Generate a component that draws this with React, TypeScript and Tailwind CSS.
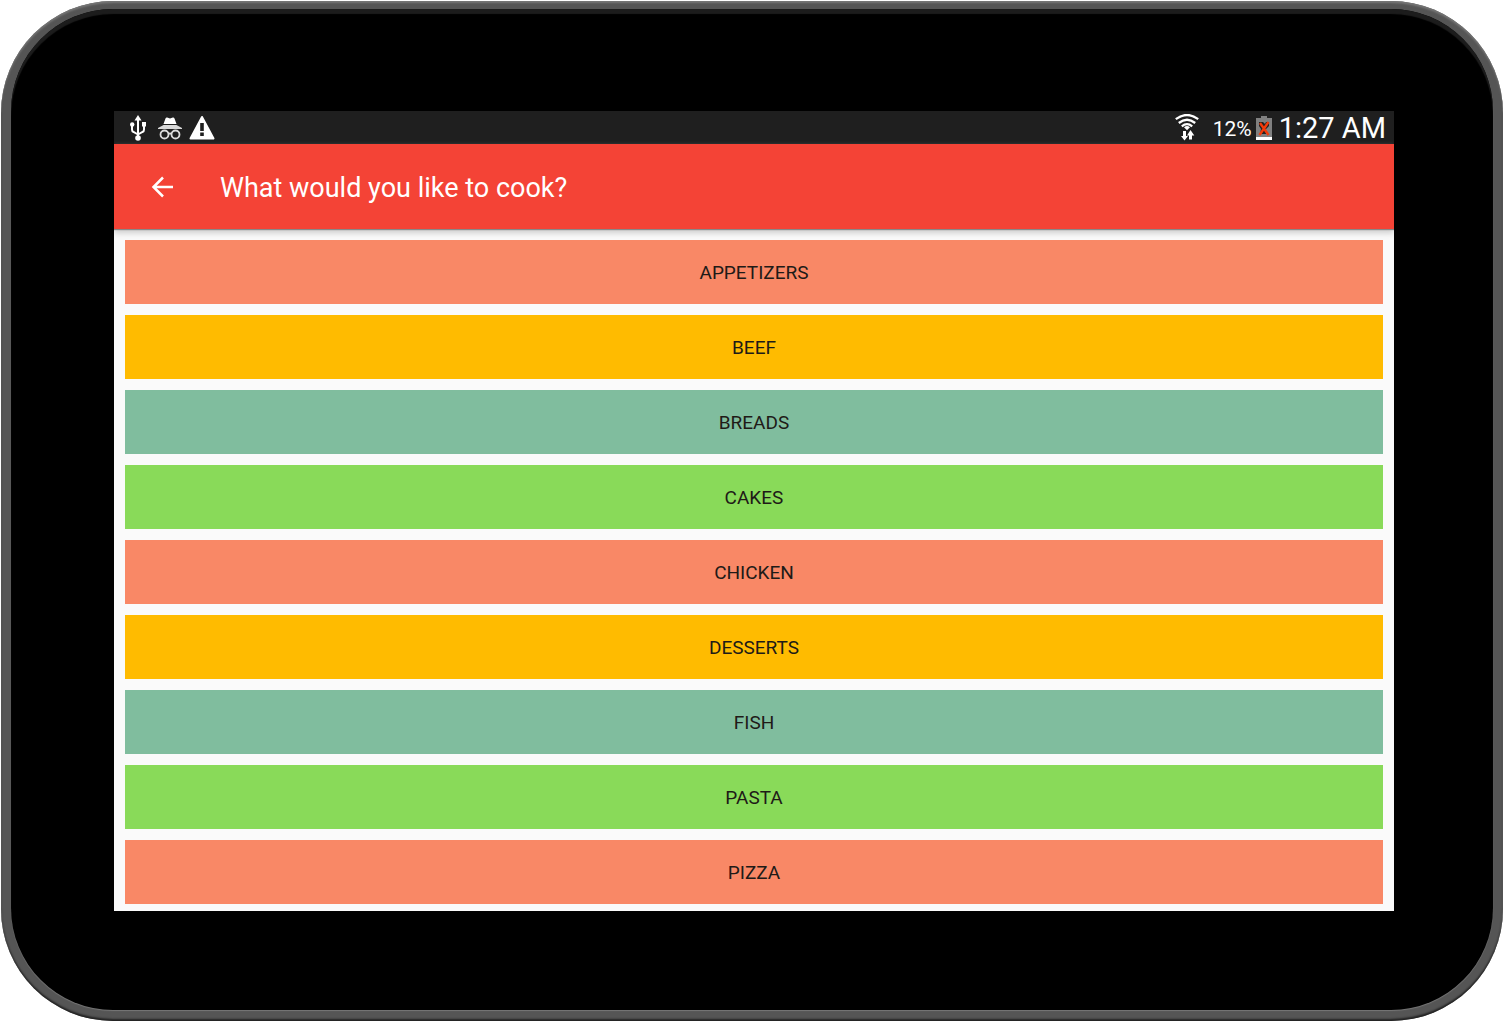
import React from "react";

const categories = [
  { name: "Appetizers", color: "bg-[#f98866]" },
  { name: "Beef", color: "bg-[#ffbb00]" },
  { name: "Breads", color: "bg-[#80bd9e]" },
  { name: "Cakes", color: "bg-[#89da59]" },
  { name: "Chicken", color: "bg-[#f98866]" },
  { name: "Desserts", color: "bg-[#ffbb00]" },
  { name: "Fish", color: "bg-[#80bd9e]" },
  { name: "Pasta", color: "bg-[#89da59]" },
  { name: "Pizza", color: "bg-[#f98866]" },
];

function UsbIcon() {
  return (
    <svg className="h-[26px] w-4" viewBox="0 0 16 26" fill="none" stroke="#fff" strokeWidth="2" aria-hidden="true">
      <path d="M8 4v18M2 10v4.500Q2 16.500 3.500 17L8 19.500M14 9v5.500Q14 16.500 12.500 17L8 19.500" />
      <path d="M8 0l3.500 5.500h-7z" fill="#fff" stroke="none" />
      <circle cx="2.200" cy="9.500" r="2.200" fill="#fff" stroke="none" />
      <path d="M12 7h4v4.500h-4z" fill="#fff" stroke="none" />
      <circle cx="8" cy="23" r="2.800" fill="#fff" stroke="none" />
    </svg>
  );
}

function IncognitoIcon() {
  return (
    <svg className="h-6 w-[26px]" viewBox="0 0 26 24" fill="none" aria-hidden="true">
      <path d="M6.500 8L8.500 2.500Q9 1.200 10.200 1.500L13 2.500 15.800 1.500Q17 1.200 17.500 2.500L19.500 8z" fill="#fff" />
      <path d="M6.500 9h13l5.500 3v1H1v-1z" fill="#d8d8d8" />
      <circle cx="7.500" cy="18.500" r="4" stroke="#ddd" strokeWidth="1.800" />
      <circle cx="18.500" cy="18.500" r="4" stroke="#ddd" strokeWidth="1.800" />
      <path d="M11.500 18Q13 16.800 14.500 18" stroke="#ddd" strokeWidth="1.800" />
    </svg>
  );
}

function WarningIcon() {
  return (
    <svg className="h-[25px] w-[26px]" viewBox="0 0 26 25" aria-hidden="true">
      <path d="M13 2L24.500 23.500h-23z" fill="#fff" stroke="#fff" strokeWidth="2" strokeLinejoin="round" />
      <path d="M11.200 8h3.600v8h-3.600zM11.200 17.500h3.600v3.500h-3.600z" fill="#1f1f1f" />
    </svg>
  );
}

function WifiIcon() {
  return (
    <svg className="h-[27px] w-6" viewBox="0 0 24 27" fill="none" stroke="#fff" aria-hidden="true">
      <path d="M.8 5.200Q12-3.200 23.200 5.200M3.800 9Q12 2.500 20.200 9M6.800 12.300Q12 8 17.200 12.300" strokeWidth="2.300" />
      <path d="M9 13.300Q12 10.800 15 13.300L12 16.300z" fill="#fff" stroke="none" />
      <path d="M8 17v5H6l3.500 4.500L13 22h-2v-5zM14 25.500v-4h-2L15.500 16l3.800 5.500H17v4z" fill="#fff" stroke="none" />
    </svg>
  );
}

function BatteryIcon() {
  return (
    <svg className="h-6 w-4" viewBox="0 0 16 24" aria-hidden="true">
      <path d="M0 2h5V0h6v2h5v19H0z" fill="#808080" />
      <path d="M0 21h16v3H0z" fill="#fff" />
      <path d="M3 6h4l2 2 1-2h3v4l-3 3v5H4l1-5-2-3z" fill="#222" />
      <path d="M4 7l8.500 12M12.500 6L3.500 19" stroke="#f33a09" strokeWidth="2.400" />
    </svg>
  );
}

function StatusBar() {
  return (
    <div className="flex h-[33px] items-center justify-between bg-[#1f1f1f] pr-2 pl-4 text-white">
      <div className="flex items-center">
        <UsbIcon />
        <span className="mr-[6px] ml-[11px]">
          <IncognitoIcon />
        </span>
        <WarningIcon />
      </div>
      <div className="flex items-center">
        <WifiIcon />
        <span className="ml-[14px] pt-0.5 text-[21px] leading-7">12%</span>
        <span className="ml-1">
          <BatteryIcon />
        </span>
        <time className="ml-[7px] text-[29px] leading-8">1:27 AM</time>
      </div>
    </div>
  );
}

export default function App() {
  return (
    <div className="bg-white p-px font-['Roboto',sans-serif]">
      <div className="rounded-[112px] bg-[#555] shadow-[inset_0_2px_2px_#777,inset_0_-2px_2px_#222]">
        <div className="px-[10px] pt-2 pb-[11px]">
          <div className="rounded-[102px] bg-black pt-[102px] pr-[99px] pb-[99px] pl-[103px] shadow-[inset_0_5px_1px_#1c1c1c,0_1px_1px_#777]">
            <main className="overflow-hidden bg-[#fafafa]">
              <StatusBar />
              <header className="flex h-[85px] items-center bg-[#f44336] pl-8 text-white shadow-[0_1px_1px_#888,0_4px_6px_#ccc]">
                <button type="button" aria-label="Back" className="flex size-8 items-center justify-center">
                  <svg className="size-[22px]" viewBox="0 0 22 22" fill="none" stroke="#fff" strokeWidth="2.500" aria-hidden="true">
                    <path d="M22 11H3M12 1.500L2.500 11l9.500 9.500" />
                  </svg>
                </button>
                <h1 className="ml-[42px] pt-0.5 text-[27px] leading-8">What would you like to cook?</h1>
              </header>
              <div className="flex flex-col gap-[11px] px-[11px] pt-[11px] pb-[7px]">
                {categories.map((category) => (
                  <button
                    key={category.name}
                    type="button"
                    className={`h-16 w-full pt-px text-[19px] leading-6 text-[#201a17] uppercase ${category.color}`}
                  >
                    {category.name}
                  </button>
                ))}
              </div>
            </main>
          </div>
        </div>
      </div>
    </div>
  );
}
